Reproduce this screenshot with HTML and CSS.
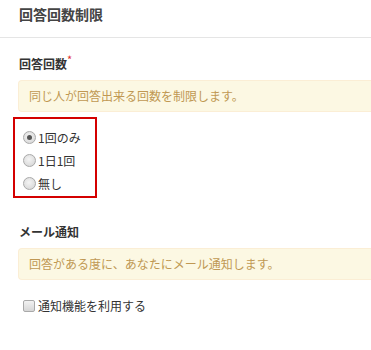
FILE: index.html
```html
<!DOCTYPE html>
<html lang="ja">
<head>
<meta charset="utf-8">
<title>回答回数制限</title>
<link rel="stylesheet" href="styles.css">
</head>
<body>
<div class="page">
  <div class="header">
    <h1 class="title">回答回数制限</h1>
  </div>
  <div class="content">
    <section class="field">
      <div class="label">回答回数<span class="req">*</span></div>
      <div class="help">同じ人が回答出来る回数を制限します。</div>
      <div class="options highlight">
        <label class="option"><input type="radio" name="limit" class="radio" checked><span>1回のみ</span></label>
        <label class="option"><input type="radio" name="limit" class="radio"><span>1日1回</span></label>
        <label class="option"><input type="radio" name="limit" class="radio"><span>無し</span></label>
      </div>
    </section>
    <section class="field field-mail">
      <div class="label">メール通知</div>
      <div class="help">回答がある度に、あなたにメール通知します。</div>
      <label class="option check-row"><input type="checkbox" class="check"><span>通知機能を利用する</span></label>
    </section>
  </div>
</div>
</body>
</html>
```

FILE: styles.css
```css
html, body {
  margin: 0;
  padding: 0;
  overflow: hidden;
  background: #fff;
}
body {
  font-family: "Noto Sans CJK JP", "DejaVu Sans", sans-serif;
  font-size: 12px;
  color: #333;
}
.page {
  width: 371px;
}
.header {
  border-bottom: 1px solid #e5e5e5;
  padding-left: 19px;
  box-sizing: border-box;
  height: 38px;
}
.title {
  margin: 0;
  font-size: 14px;
  font-weight: bold;
  line-height: 29px;
  color: #444;
}
.content {
  padding-left: 18px;
}
.field {
  padding-top: 13px;
}
.field-mail {
  padding-top: 26px;
}
.label {
  font-size: 12px;
  font-weight: bold;
  line-height: 16px;
  padding-left: 1px;
  color: #333;
}
.req {
  color: #e03030;
  font-size: 11px;
  vertical-align: 5px;
  font-weight: normal;
}
.help {
  margin-top: 8px;
  height: 32px;
  box-sizing: border-box;
  background: #fcf8e3;
  border: 1px solid #fbeed5;
  border-right: none;
  border-radius: 4px 0 0 4px;
  color: #c09853;
  line-height: 30px;
  padding-left: 10px;
}
.options {
  display: flex;
  flex-direction: column;
  margin-top: 5px;
}
.highlight {
  margin-left: -5px;
  width: 84px;
  box-sizing: border-box;
  border: 2px solid #d40000;
  padding: 7px 0 1px 8px;
}
.option {
  display: flex;
  align-items: center;
  height: 23px;
  line-height: 23px;
  color: #333;
}
.radio {
  -webkit-appearance: none;
  appearance: none;
  margin: 0 2px 0 0;
  width: 13px;
  height: 13px;
  border-radius: 50%;
  border: 1px solid #a9a9a9;
  background: radial-gradient(circle at 45% 40%, #f4f4f4 0%, #dcdcdc 70%, #cfcfcf 100%);
  box-sizing: border-box;
  position: relative;
  flex: none;
}
.radio:checked::after {
  content: "";
  position: absolute;
  left: 3px;
  top: 3px;
  width: 5px;
  height: 5px;
  border-radius: 50%;
  background: #555;
}
.check-row {
  margin-top: 14px;
  padding-left: 5px;
}
.check {
  -webkit-appearance: none;
  appearance: none;
  margin: 0 3px 0 0;
  width: 12px;
  height: 12px;
  border: 1px solid #a9a9a9;
  border-radius: 2px;
  background: linear-gradient(#f2f2f2, #d6d6d6);
  box-sizing: border-box;
  flex: none;
}
```
